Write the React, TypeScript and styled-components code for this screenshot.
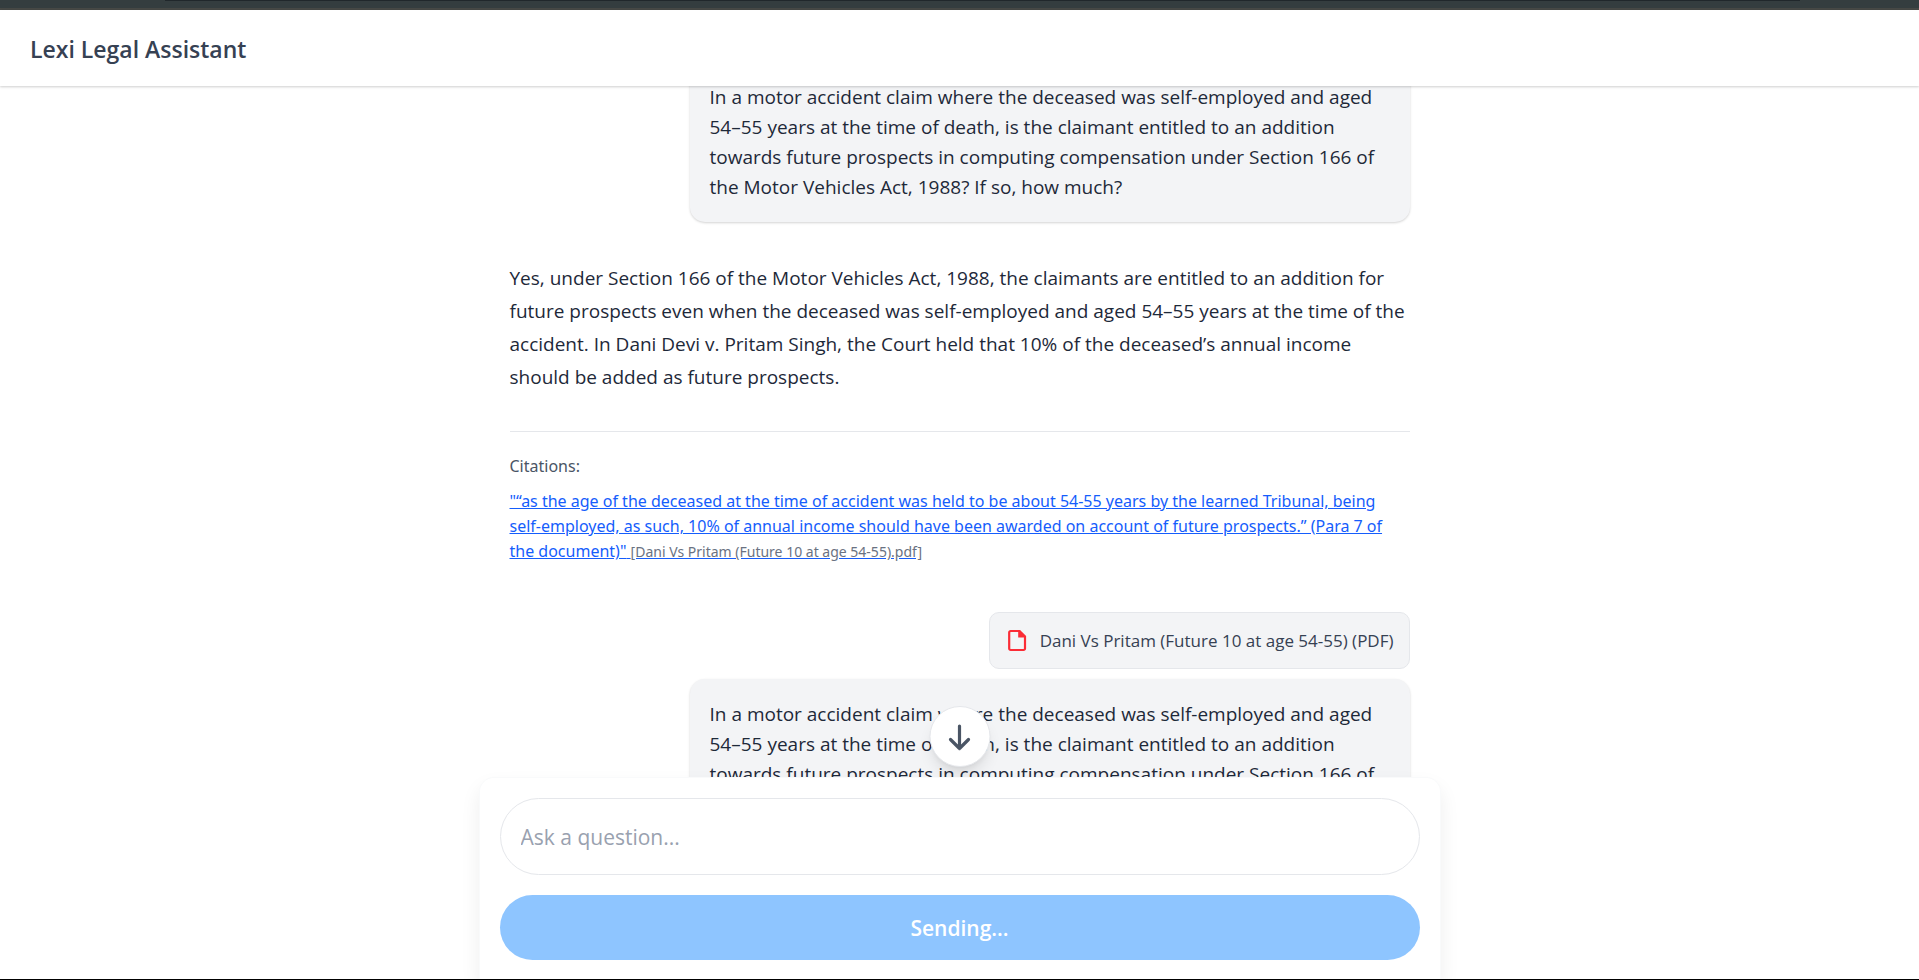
import React, { useLayoutEffect, useRef } from "react";
import styled, { createGlobalStyle } from "styled-components";

const GlobalStyle = createGlobalStyle`
  *, *::before, *::after { box-sizing: border-box; }
  body {
    margin: 0;
    background: #ffffff;
    color: #1e2939;
    font-family: "Segoe UI", "Open Sans", "Noto Sans", sans-serif;
    font-size: 19px;
  }
  p, h1, h2 { margin: 0; }
`;

const Page = styled.div`
  display: flex;
  flex-direction: column;
  height: 100vh;
  border-bottom: 1px solid #000000;
`;

const WindowEdge = styled.div`
  flex: none;
  height: 10px;
  padding: 0 119px 0 165px;
  background: #343d3f;
  border-bottom: 2px solid #474946;
`;

const AddressBarEdge = styled.div`
  height: 1px;
  background: #20272b;
`;

const Header = styled.header`
  flex: none;
  display: flex;
  align-items: center;
  height: 76px;
  padding: 2px 30px 0;
  background: #ffffff;
  box-shadow: 0 1px 3px rgba(0, 0, 0, 0.1), 0 1px 2px rgba(0, 0, 0, 0.1);
  z-index: 1;
`;

const Title = styled.h1`
  font-size: 23px;
  font-weight: 600;
  line-height: 32px;
  color: #364153;
`;

const Conversation = styled.main`
  position: relative;
  flex: 1;
  min-height: 0;
  display: flex;
`;

const ScrollArea = styled.div`
  flex: 1;
  overflow-y: auto;
  scrollbar-width: none;
`;

const Thread = styled.div`
  display: flex;
  flex-direction: column;
  max-width: 960px;
  margin: 0 auto;
  padding: 40px 30px;
`;

const Question = styled.p`
  align-self: flex-end;
  width: 80%;
  padding: 20px;
  border-radius: 15px;
  background: #f3f4f6;
  box-shadow: 0 1px 3px rgba(0, 0, 0, 0.1), 0 1px 2px rgba(0, 0, 0, 0.08);
  line-height: 30px;
`;

const Answer = styled.article`
  margin: 40px 0 48px;
`;

const AnswerText = styled.p`
  line-height: 33px;
`;

const Citations = styled.section`
  display: flex;
  flex-direction: column;
  gap: 10px;
  margin-top: 37px;
  padding-top: 22px;
  border-top: 1px solid #e5e7eb;
  font-family: "Segoe UI", "Noto Sans", sans-serif;
  font-size: 16px;
  line-height: 25px;
`;

const CitationsTitle = styled.h2`
  font-size: 16px;
  font-weight: 400;
  color: #4a5565;
`;

const CitationLink = styled.a`
  color: #155dfc;
  text-decoration: underline;
`;

const CitationSource = styled.span`
  font-size: 14px;
  color: #6a7282;
`;

const Attachment = styled.div`
  align-self: flex-end;
  display: flex;
  align-items: center;
  gap: 10px;
  height: 57px;
  margin-bottom: 10px;
  padding: 0 15px;
  border: 1px solid #e5e7eb;
  border-radius: 10px;
  background: #f3f4f6;
  color: #364153;
  font-size: 17px;
`;

const ScrollDownButton = styled.button`
  position: absolute;
  left: 50%;
  bottom: 10px;
  display: grid;
  place-items: center;
  width: 61px;
  height: 61px;
  padding: 0;
  transform: translateX(-50%);
  border: 1px solid #e5e7eb;
  border-radius: 50%;
  background: #ffffff;
  color: #4a5565;
  box-shadow: 0 10px 15px -3px rgba(0, 0, 0, 0.1), 0 4px 6px -4px rgba(0, 0, 0, 0.1);
`;

const Composer = styled.form`
  flex: none;
  display: flex;
  flex-direction: column;
  gap: 20px;
  width: 100%;
  max-width: 962px;
  margin: 0 auto;
  padding: 20px 20px 19px;
  border: 1px solid #f9fafb;
  border-bottom: 0;
  border-radius: 15px 15px 0 0;
  background: #ffffff;
  box-shadow: 0 10px 20px rgba(0, 0, 0, 0.07);
  z-index: 1;
`;

const QuestionInput = styled.input`
  height: 77px;
  padding: 0 20px;
  border: 1px solid #e5e7eb;
  border-radius: 39px;
  background: #ffffff;
  color: #1e2939;
  font-family: inherit;
  font-size: 21px;
  outline: none;
  &::placeholder { color: #99a1af; opacity: 1; }
`;

const SendButton = styled.button`
  height: 65px;
  border: 0;
  border-radius: 33px;
  background: #8ec5ff;
  color: #ffffff;
  font-family: inherit;
  font-size: 21px;
  font-weight: 600;
`;

const FileIcon = () => (
  <svg width="25" height="25" viewBox="0 0 25 25" fill="none" aria-hidden="true">
    <path
      d="M5.6 3H14.6L20 8.4V20.6a1.4 1.4 0 0 1-1.4 1.4H5.6a1.4 1.4 0 0 1-1.4-1.4V4.4A1.4 1.4 0 0 1 5.6 3Z"
      stroke="#fb2c36"
      strokeWidth="2.2"
    />
    <path d="M13.2 2.5V9.4H20.5Z" fill="#fb2c36" />
  </svg>
);

const ArrowDownIcon = () => (
  <svg width="30" height="30" viewBox="0 0 30 30" fill="none" aria-hidden="true">
    <path
      d="M15 4V26.5M6 17.5L15 26.5L24 17.5"
      stroke="currentColor"
      strokeWidth="3.2"
      strokeLinecap="round"
      strokeLinejoin="round"
    />
  </svg>
);

const question =
  "In a motor accident claim where the deceased was self-employed and aged 54–55 years at the time of death, is the claimant entitled to an addition towards future prospects in computing compensation under Section 166 of the Motor Vehicles Act, 1988? If so, how much?";

const INITIAL_SCROLL = 64;

export default function App() {
  const scroller = useRef<HTMLDivElement>(null);

  useLayoutEffect(() => {
    if (scroller.current) scroller.current.scrollTop = INITIAL_SCROLL;
  }, []);

  const scrollToEnd = () =>
    scroller.current?.scrollTo({ top: scroller.current.scrollHeight, behavior: "smooth" });

  return (
    <>
      <GlobalStyle />
      <Page>
        <WindowEdge>
          <AddressBarEdge />
        </WindowEdge>
        <Header>
          <Title>Lexi Legal Assistant</Title>
        </Header>
        <Conversation>
          <ScrollArea ref={scroller}>
            <Thread>
              <Question>{question}</Question>
              <Answer>
                <AnswerText>
                  Yes, under Section 166 of the Motor Vehicles Act, 1988, the claimants are
                  entitled to an addition for future prospects even when the deceased was
                  self-employed and aged 54–55 years at the time of the accident. In Dani Devi v.
                  Pritam Singh, the Court held that 10% of the deceased’s annual income should be
                  added as future prospects.
                </AnswerText>
                <Citations>
                  <CitationsTitle>Citations:</CitationsTitle>
                  <CitationLink href="#citation">
                    "“as the age of the deceased at the time of accident was held to be about 54-55
                    years by the learned Tribunal, being
                    <br />
                    self-employed, as such, 10% of annual income should have been awarded on
                    account of future prospects.” (Para 7 of
                    <br />
                    the document)"{" "}
                    <CitationSource>[Dani Vs Pritam (Future 10 at age 54-55).pdf]</CitationSource>
                  </CitationLink>
                </Citations>
              </Answer>
              <Attachment>
                <FileIcon />
                Dani Vs Pritam (Future 10 at age 54-55) (PDF)
              </Attachment>
              <Question>{question}</Question>
            </Thread>
          </ScrollArea>
          <ScrollDownButton type="button" aria-label="Scroll to latest" onClick={scrollToEnd}>
            <ArrowDownIcon />
          </ScrollDownButton>
        </Conversation>
        <Composer onSubmit={(event) => event.preventDefault()}>
          <QuestionInput type="text" aria-label="Ask a question" placeholder="Ask a question..." />
          <SendButton type="submit" disabled>
            Sending...
          </SendButton>
        </Composer>
      </Page>
    </>
  );
}
